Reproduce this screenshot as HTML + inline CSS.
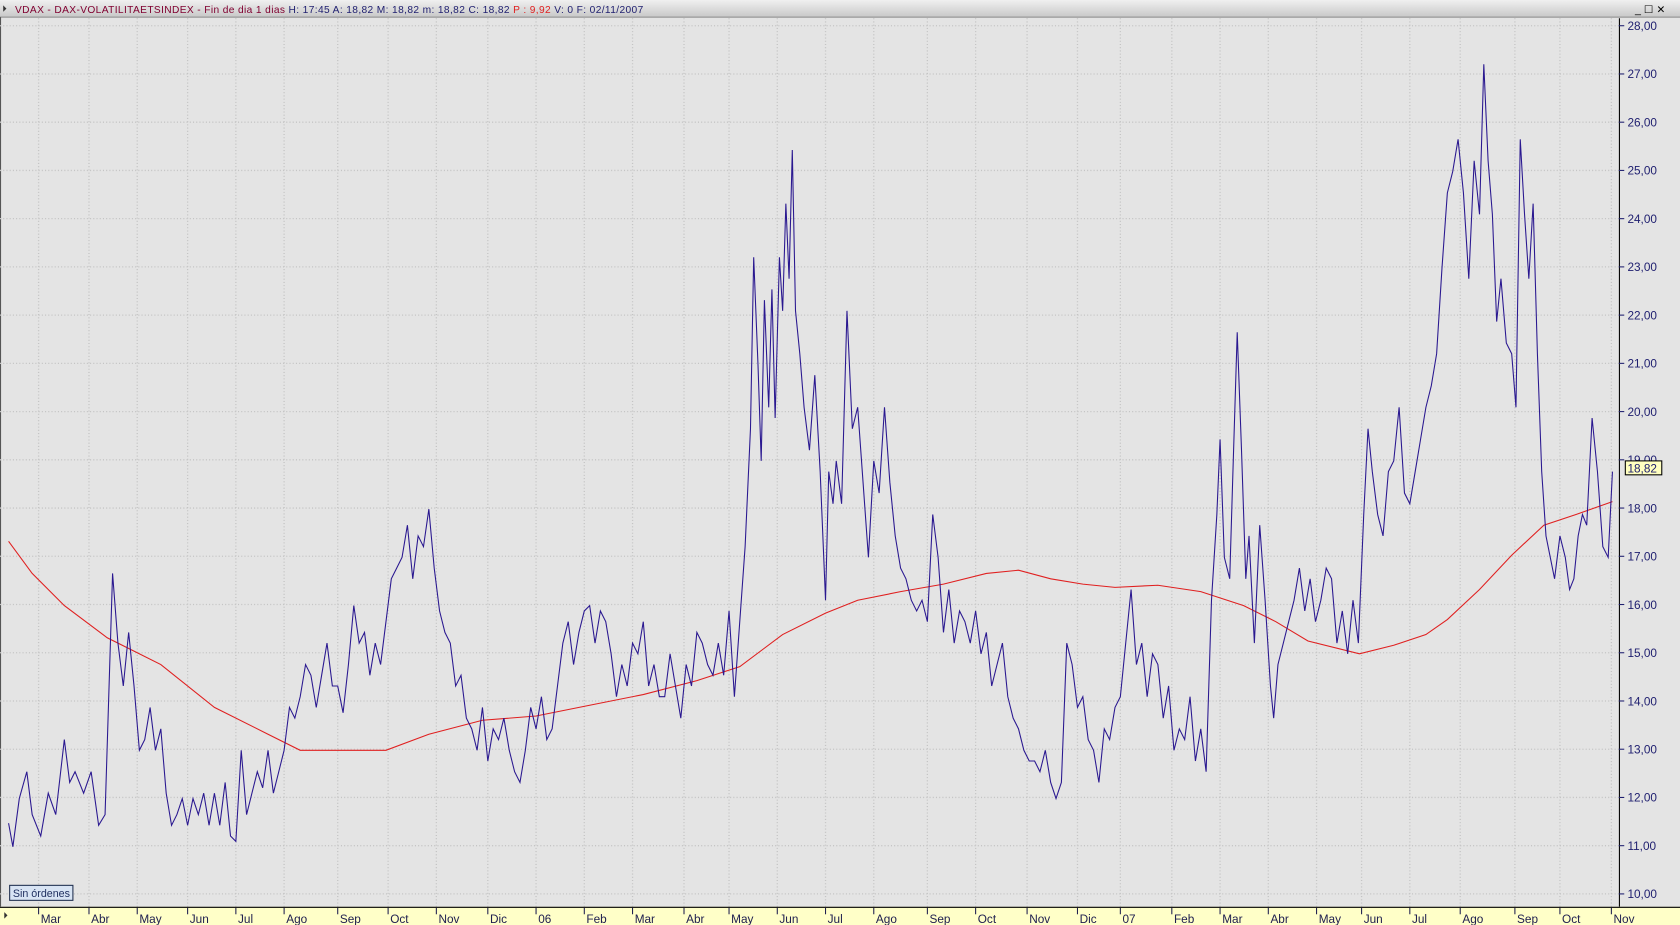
<!DOCTYPE html>
<html><head><meta charset="utf-8"><style>
html,body{margin:0;padding:0;width:1680px;height:925px;overflow:hidden;background:#e4e4e4}
svg{display:block}
text{font-family:"Liberation Sans",sans-serif}
</style></head><body>
<svg width="1680" height="925" viewBox="0 0 1567 863" preserveAspectRatio="none">
<defs><linearGradient id="hg" x1="0" y1="0" x2="0" y2="1"><stop offset="0" stop-color="#f0f0f0"/><stop offset="1" stop-color="#c8c8c8"/></linearGradient></defs>
<rect x="0" y="0" width="1567" height="863" fill="#e4e4e4"/>
<rect x="0" y="0" width="1567" height="16" fill="url(#hg)"/>
<line x1="0" y1="16" x2="1567" y2="16" stroke="#888"/>
<line x1="0.5" y1="16" x2="0.5" y2="846" stroke="#555"/>
<polygon points="3,5 6,8 3,11" fill="#333"/>
<text x="14" y="12" font-size="9.5" textLength="586" lengthAdjust="spacing"><tspan fill="#800030">VDAX - DAX-VOLATILITAETSINDEX - Fin de dia 1 dias </tspan><tspan fill="#202070">H: 17:45  A: 18,82  M: 18,82  m: 18,82  C: 18,82 </tspan><tspan fill="#e02020"> P : 9,92 </tspan><tspan fill="#202070"> V: 0  F: 02/11/2007</tspan></text>
<text x="1525" y="12" font-size="10" fill="#000">_ ☐ ✕</text>
<g stroke="#c4c4c4" stroke-dasharray="1 2" stroke-width="1.2">
<line x1="0" y1="24" x2="1510" y2="24"/><line x1="0" y1="69" x2="1510" y2="69"/><line x1="0" y1="114" x2="1510" y2="114"/><line x1="0" y1="159" x2="1510" y2="159"/><line x1="0" y1="204" x2="1510" y2="204"/><line x1="0" y1="249" x2="1510" y2="249"/><line x1="0" y1="294" x2="1510" y2="294"/><line x1="0" y1="339" x2="1510" y2="339"/><line x1="0" y1="384" x2="1510" y2="384"/><line x1="0" y1="429" x2="1510" y2="429"/><line x1="0" y1="474" x2="1510" y2="474"/><line x1="0" y1="519" x2="1510" y2="519"/><line x1="0" y1="564" x2="1510" y2="564"/><line x1="0" y1="609" x2="1510" y2="609"/><line x1="0" y1="654" x2="1510" y2="654"/><line x1="0" y1="699" x2="1510" y2="699"/><line x1="0" y1="744" x2="1510" y2="744"/><line x1="0" y1="789" x2="1510" y2="789"/><line x1="0" y1="834" x2="1510" y2="834"/>
<line x1="36" y1="17" x2="36" y2="846"/><line x1="83" y1="17" x2="83" y2="846"/><line x1="128" y1="17" x2="128" y2="846"/><line x1="175" y1="17" x2="175" y2="846"/><line x1="220" y1="17" x2="220" y2="846"/><line x1="265" y1="17" x2="265" y2="846"/><line x1="315" y1="17" x2="315" y2="846"/><line x1="362" y1="17" x2="362" y2="846"/><line x1="407" y1="17" x2="407" y2="846"/><line x1="455" y1="17" x2="455" y2="846"/><line x1="500" y1="17" x2="500" y2="846"/><line x1="545" y1="17" x2="545" y2="846"/><line x1="590" y1="17" x2="590" y2="846"/><line x1="638" y1="17" x2="638" y2="846"/><line x1="680" y1="17" x2="680" y2="846"/><line x1="725" y1="17" x2="725" y2="846"/><line x1="770" y1="17" x2="770" y2="846"/><line x1="815" y1="17" x2="815" y2="846"/><line x1="865" y1="17" x2="865" y2="846"/><line x1="910" y1="17" x2="910" y2="846"/><line x1="958" y1="17" x2="958" y2="846"/><line x1="1005" y1="17" x2="1005" y2="846"/><line x1="1045" y1="17" x2="1045" y2="846"/><line x1="1093" y1="17" x2="1093" y2="846"/><line x1="1138" y1="17" x2="1138" y2="846"/><line x1="1183" y1="17" x2="1183" y2="846"/><line x1="1228" y1="17" x2="1228" y2="846"/><line x1="1270" y1="17" x2="1270" y2="846"/><line x1="1315" y1="17" x2="1315" y2="846"/><line x1="1362" y1="17" x2="1362" y2="846"/><line x1="1413" y1="17" x2="1413" y2="846"/><line x1="1455" y1="17" x2="1455" y2="846"/><line x1="1503" y1="17" x2="1503" y2="846"/>
</g>
<polyline fill="none" stroke="#e02020" stroke-width="1" points="8,505 30,535 60,565 100,595 150,620 200,660 250,685 280,700 320,700 360,700 400,685 450,672 500,668 550,658 600,648 650,635 690,622 730,592 770,572 800,560 840,552 880,545 920,535 950,532 980,540 1010,545 1040,548 1080,546 1120,552 1160,565 1190,580 1220,598 1268,610 1300,602 1330,592 1350,578 1380,550 1410,518 1440,490 1470,480 1504,468"/>
<polyline fill="none" stroke="#2a1890" stroke-width="1" points="8,768 12,790 18,745 25,720 30,760 38,780 45,740 52,760 60,690 65,730 70,720 78,740 85,720 92,770 98,760 105,535 110,600 115,640 120,590 125,640 130,700 135,690 140,660 145,700 150,680 155,740 160,770 165,760 170,745 175,770 180,745 185,760 190,740 195,770 200,740 205,770 210,730 215,780 220,785 225,700 230,760 235,740 240,720 245,735 250,700 255,740 260,720 265,700 270,660 275,670 280,650 285,620 290,630 295,660 300,630 305,600 310,640 315,640 320,665 325,620 330,565 335,600 340,590 345,630 350,600 355,620 360,580 365,540 370,530 375,520 380,490 385,540 390,500 395,510 400,475 405,530 410,570 415,590 420,600 425,640 430,630 435,670 440,680 445,700 450,660 455,710 460,680 465,690 470,670 475,700 480,720 485,730 490,700 495,660 500,680 505,650 510,690 515,680 520,640 525,600 530,580 535,620 540,590 545,570 550,565 555,600 560,570 565,580 570,610 575,650 580,620 585,640 590,600 595,610 600,580 605,640 610,620 615,650 620,650 625,610 630,640 635,670 640,620 645,640 650,590 655,600 660,620 665,630 670,600 675,630 680,570 685,650 690,580 695,510 700,400 703,240 707,340 710,430 713,280 717,380 720,270 723,390 727,240 730,290 733,190 736,260 739,140 742,290 746,330 750,380 755,420 760,350 765,440 770,560 773,440 777,470 780,430 785,470 790,290 795,400 800,380 805,450 810,520 815,430 820,460 825,380 830,450 835,500 840,530 845,540 850,560 855,570 860,560 865,580 870,480 875,520 880,590 885,550 890,600 895,570 900,580 905,600 910,570 915,610 920,590 925,640 930,620 935,600 940,650 945,670 950,680 955,700 960,710 965,710 970,720 975,700 980,730 985,745 990,730 995,600 1000,620 1005,660 1010,650 1015,690 1020,700 1025,730 1030,680 1035,690 1040,660 1045,650 1050,600 1055,550 1060,620 1065,600 1070,650 1075,610 1080,620 1085,670 1090,640 1095,700 1100,680 1105,690 1110,650 1115,710 1120,680 1125,720 1130,560 1135,480 1138,410 1142,520 1147,540 1150,440 1154,310 1158,420 1162,540 1165,500 1170,600 1175,490 1180,560 1185,640 1188,670 1192,620 1197,600 1202,580 1207,560 1212,530 1217,570 1222,540 1227,580 1232,560 1237,530 1242,540 1247,600 1252,570 1257,610 1262,560 1267,600 1272,480 1276,400 1280,440 1285,480 1290,500 1295,440 1300,430 1305,380 1310,460 1315,470 1320,440 1325,410 1330,380 1335,360 1340,330 1345,250 1350,180 1355,160 1360,130 1365,180 1370,260 1375,150 1380,200 1384,60 1388,150 1392,200 1396,300 1400,260 1405,320 1410,330 1414,380 1418,130 1422,200 1426,260 1430,190 1434,330 1438,440 1442,500 1446,520 1450,540 1455,500 1460,520 1464,550 1468,540 1472,500 1476,480 1480,490 1485,390 1490,440 1495,510 1500,520 1504,440"/>
<rect x="9" y="826" width="59" height="14" fill="#d8e4f4" stroke="#203050"/>
<text x="12" y="837" font-size="10" fill="#203060">Sin órdenes</text>
<line x1="1510.5" y1="17" x2="1510.5" y2="846" stroke="#000"/>
<g font-size="11" fill="#202070">
<text x="1518" y="28">28,00</text><text x="1518" y="73">27,00</text><text x="1518" y="118">26,00</text><text x="1518" y="163">25,00</text><text x="1518" y="208">24,00</text><text x="1518" y="253">23,00</text><text x="1518" y="298">22,00</text><text x="1518" y="343">21,00</text><text x="1518" y="388">20,00</text><text x="1518" y="433">19,00</text><text x="1518" y="478">18,00</text><text x="1518" y="523">17,00</text><text x="1518" y="568">16,00</text><text x="1518" y="613">15,00</text><text x="1518" y="658">14,00</text><text x="1518" y="703">13,00</text><text x="1518" y="748">12,00</text><text x="1518" y="793">11,00</text><text x="1518" y="838">10,00</text>
</g>
<g stroke="#202070"><line x1="1510" y1="24" x2="1515" y2="24"/><line x1="1510" y1="69" x2="1515" y2="69"/><line x1="1510" y1="114" x2="1515" y2="114"/><line x1="1510" y1="159" x2="1515" y2="159"/><line x1="1510" y1="204" x2="1515" y2="204"/><line x1="1510" y1="249" x2="1515" y2="249"/><line x1="1510" y1="294" x2="1515" y2="294"/><line x1="1510" y1="339" x2="1515" y2="339"/><line x1="1510" y1="384" x2="1515" y2="384"/><line x1="1510" y1="429" x2="1515" y2="429"/><line x1="1510" y1="474" x2="1515" y2="474"/><line x1="1510" y1="519" x2="1515" y2="519"/><line x1="1510" y1="564" x2="1515" y2="564"/><line x1="1510" y1="609" x2="1515" y2="609"/><line x1="1510" y1="654" x2="1515" y2="654"/><line x1="1510" y1="699" x2="1515" y2="699"/><line x1="1510" y1="744" x2="1515" y2="744"/><line x1="1510" y1="789" x2="1515" y2="789"/><line x1="1510" y1="834" x2="1515" y2="834"/></g>
<rect x="1516" y="430" width="34" height="13" fill="#ffffc0" stroke="#000"/>
<text x="1518" y="441" font-size="11" fill="#202070">18,82</text>
<rect x="0" y="846" width="1567" height="17" fill="#ffffc8"/>
<line x1="0" y1="846.5" x2="1567" y2="846.5" stroke="#000"/>
<polygon points="4,851 7,854 4,857" fill="#333"/>
<g font-size="11" fill="#202050">
<text x="38" y="861">Mar</text><text x="85" y="861">Abr</text><text x="130" y="861">May</text><text x="177" y="861">Jun</text><text x="222" y="861">Jul</text><text x="267" y="861">Ago</text><text x="317" y="861">Sep</text><text x="364" y="861">Oct</text><text x="409" y="861">Nov</text><text x="457" y="861">Dic</text><text x="502" y="861">06</text><text x="547" y="861">Feb</text><text x="592" y="861">Mar</text><text x="640" y="861">Abr</text><text x="682" y="861">May</text><text x="727" y="861">Jun</text><text x="772" y="861">Jul</text><text x="817" y="861">Ago</text><text x="867" y="861">Sep</text><text x="912" y="861">Oct</text><text x="960" y="861">Nov</text><text x="1007" y="861">Dic</text><text x="1047" y="861">07</text><text x="1095" y="861">Feb</text><text x="1140" y="861">Mar</text><text x="1185" y="861">Abr</text><text x="1230" y="861">May</text><text x="1272" y="861">Jun</text><text x="1317" y="861">Jul</text><text x="1364" y="861">Ago</text><text x="1415" y="861">Sep</text><text x="1457" y="861">Oct</text><text x="1505" y="861">Nov</text>
</g>
<g stroke="#202050"><line x1="36" y1="847" x2="36" y2="853"/><line x1="83" y1="847" x2="83" y2="853"/><line x1="128" y1="847" x2="128" y2="853"/><line x1="175" y1="847" x2="175" y2="853"/><line x1="220" y1="847" x2="220" y2="853"/><line x1="265" y1="847" x2="265" y2="853"/><line x1="315" y1="847" x2="315" y2="853"/><line x1="362" y1="847" x2="362" y2="853"/><line x1="407" y1="847" x2="407" y2="853"/><line x1="455" y1="847" x2="455" y2="853"/><line x1="500" y1="847" x2="500" y2="853"/><line x1="545" y1="847" x2="545" y2="853"/><line x1="590" y1="847" x2="590" y2="853"/><line x1="638" y1="847" x2="638" y2="853"/><line x1="680" y1="847" x2="680" y2="853"/><line x1="725" y1="847" x2="725" y2="853"/><line x1="770" y1="847" x2="770" y2="853"/><line x1="815" y1="847" x2="815" y2="853"/><line x1="865" y1="847" x2="865" y2="853"/><line x1="910" y1="847" x2="910" y2="853"/><line x1="958" y1="847" x2="958" y2="853"/><line x1="1005" y1="847" x2="1005" y2="853"/><line x1="1045" y1="847" x2="1045" y2="853"/><line x1="1093" y1="847" x2="1093" y2="853"/><line x1="1138" y1="847" x2="1138" y2="853"/><line x1="1183" y1="847" x2="1183" y2="853"/><line x1="1228" y1="847" x2="1228" y2="853"/><line x1="1270" y1="847" x2="1270" y2="853"/><line x1="1315" y1="847" x2="1315" y2="853"/><line x1="1362" y1="847" x2="1362" y2="853"/><line x1="1413" y1="847" x2="1413" y2="853"/><line x1="1455" y1="847" x2="1455" y2="853"/><line x1="1503" y1="847" x2="1503" y2="853"/></g>
</svg>
</body></html>
